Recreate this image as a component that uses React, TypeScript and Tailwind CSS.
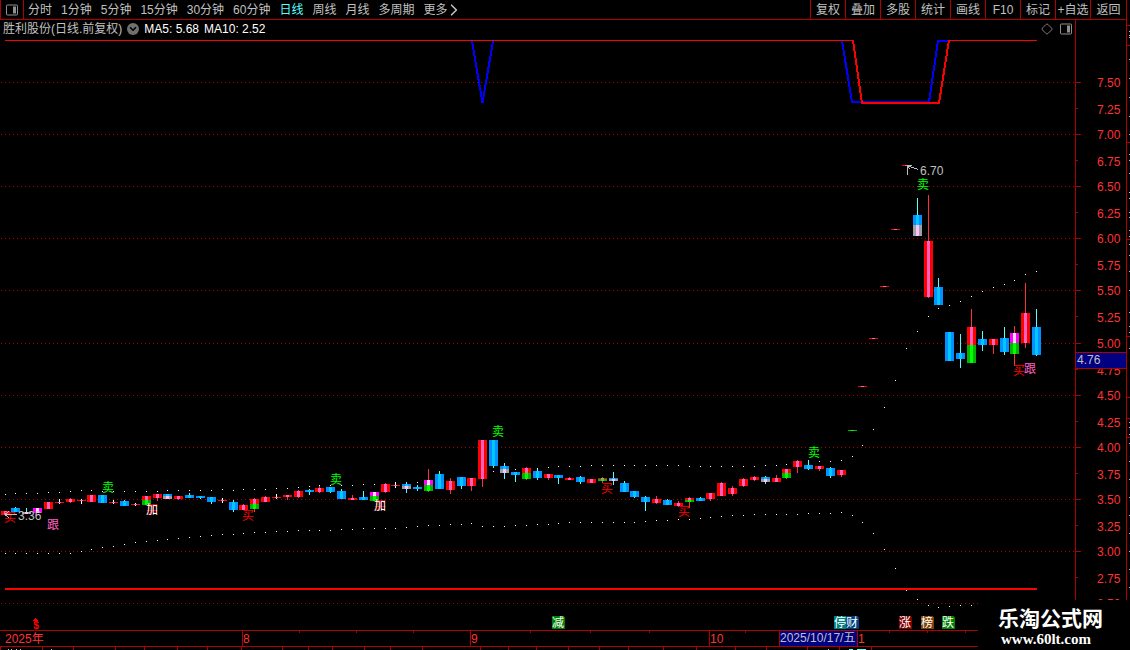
import { ChevronDown, ChevronRight, Diamond } from 'lucide-react';

type Kind = 'r' | 'b' | 'm' | 'g' | 's' | 'w';

// [kind, high, top, bottom, low, lower kind, split]
type Candle = [Kind, number, number, number, number, Kind?, number?];

interface Marker {
  x: number;
  y: number;
  text: string;
  fill: string;
}

const LINE = '#b00000';
const SILVER = '#c0c0c0';

const COLORS: Record<Kind, { body: string; core: string; wick: string }> = {
  r: { body: '#ff0000', core: '#ff60c0', wick: '#ff3232' },
  b: { body: '#0090ff', core: '#00c8ff', wick: '#54ffff' },
  m: { body: '#ff00ff', core: '#ffd8ff', wick: '#ff3232' },
  g: { body: '#00b400', core: '#00ff00', wick: '#00ff00' },
  s: { body: '#a0a0a0', core: '#ffc0ff', wick: '#54ffff' },
  w: { body: '#ff0000', core: '#ff60c0', wick: '#ffffff' },
};

const PERIODS = [
  '分时',
  '1分钟',
  '5分钟',
  '15分钟',
  '30分钟',
  '60分钟',
  '日线',
  '周线',
  '月线',
  '多周期',
];

const TOOLS = ['复权', '叠加', '多股', '统计', '画线', 'F10', '标记', '+自选'];

const CANDLES: Candle[] = [
  ['r', 511, 511, 515, 515],
  ['b', 507, 508, 512, 512],
  ['s', 508, 512, 514, 514],
  ['m', 508, 508, 513, 513],
  ['r', 502, 502, 509, 509],
  ['w', 499, 502, 503, 504],
  ['r', 498, 499, 502, 503],
  ['w', 499, 500, 501, 504],
  ['r', 495, 495, 502, 502],
  ['b', 495, 495, 503, 503],
  ['w', 500, 502, 503, 504],
  ['b', 500, 501, 506, 506],
  ['w', 503, 504, 505, 506],
  ['r', 496, 496, 505, 505, 'g', 500],
  ['r', 494, 494, 498, 501],
  ['b', 494, 494, 499, 499, 's', 496],
  ['r', 496, 496, 499, 500],
  ['b', 493, 495, 498, 498],
  ['b', 496, 496, 498, 499],
  ['b', 497, 497, 502, 504],
  ['w', 498, 500, 501, 503],
  ['b', 500, 502, 510, 512],
  ['r', 504, 505, 510, 510],
  ['r', 498, 499, 509, 512, 'g', 504],
  ['r', 496, 497, 502, 502],
  ['w', 494, 497, 498, 499],
  ['r', 495, 495, 497, 500],
  ['r', 490, 491, 497, 498],
  ['b', 489, 490, 492, 495],
  ['r', 486, 488, 492, 493],
  ['b', 487, 487, 492, 493],
  ['b', 489, 491, 499, 499],
  ['r', 495, 498, 500, 500],
  ['b', 491, 497, 500, 500],
  ['m', 492, 492, 501, 501, 'g', 496],
  ['r', 483, 484, 492, 493],
  ['w', 482, 485, 486, 488],
  ['b', 482, 484, 489, 493, 's', 486],
  ['b', 485, 487, 489, 491],
  ['m', 469, 480, 491, 492, 'g', 485],
  ['b', 471, 474, 489, 489],
  ['r', 478, 481, 490, 494],
  ['b', 477, 477, 486, 489],
  ['r', 478, 478, 486, 491],
  ['r', 440, 440, 479, 487],
  ['b', 440, 440, 466, 468],
  ['b', 463, 466, 473, 479, 's', 469],
  ['b', 472, 472, 475, 482],
  ['r', 467, 468, 479, 480, 'g', 473],
  ['b', 469, 471, 478, 480],
  ['r', 474, 474, 478, 480],
  ['b', 475, 475, 478, 484],
  ['r', 477, 478, 480, 480],
  ['b', 476, 477, 482, 484],
  ['r', 479, 479, 483, 483],
  ['r', 477, 478, 481, 483, 'g', 479],
  ['b', 472, 478, 481, 485, 's', 479],
  ['b', 481, 483, 492, 492],
  ['b', 491, 491, 497, 498],
  ['b', 496, 497, 502, 511],
  ['r', 496, 499, 503, 504],
  ['b', 499, 500, 505, 505],
  ['r', 501, 503, 506, 507],
  ['r', 497, 498, 502, 508, 'g', 500],
  ['b', 497, 498, 501, 501],
  ['r', 493, 493, 499, 501],
  ['r', 482, 483, 496, 496],
  ['r', 486, 488, 494, 496],
  ['r', 478, 479, 486, 487],
  ['r', 476, 477, 480, 481],
  ['b', 476, 477, 482, 484, 's', 479],
  ['r', 475, 478, 482, 482],
  ['r', 469, 469, 478, 479, 'g', 473],
  ['r', 460, 461, 467, 473],
  ['b', 460, 465, 469, 470],
  ['r', 466, 466, 469, 471],
  ['b', 467, 468, 476, 478],
  ['r', 470, 470, 475, 477],
  ['g', 430, 430, 431, 431],
  ['r', 386, 386, 387, 387],
  ['r', 338, 338, 339, 339],
  ['r', 286, 286, 287, 287],
  ['r', 229, 229, 230, 230],
  ['r', 165, 165, 166, 166],
  ['b', 198, 215, 236, 236, 's', 225],
  ['r', 195, 241, 297, 298],
  ['b', 278, 287, 305, 305],
  ['b', 332, 332, 361, 361],
  ['b', 334, 353, 359, 368],
  ['r', 309, 327, 363, 363, 'g', 345],
  ['b', 331, 339, 345, 351],
  ['r', 339, 339, 345, 354],
  ['b', 327, 338, 352, 355],
  ['m', 326, 333, 354, 366, 'g', 343],
  ['r', 283, 313, 343, 348],
  ['b', 309, 327, 355, 356],
];

const UPPER_BAND = [
  494, 493, 493, 493, 492, 492, 491, 490, 490, 491, 491, 491, 491, 491, 491,
  490, 490, 490, 490, 490, 489, 490, 489, 489, 489, 488, 488, 487, 486, 485,
  485, 485, 485, 484, 484, 483, 482, 482, 482, 481, 481, 480, 479, 478, 475,
  471, 470, 469, 468, 468, 467, 466, 466, 466, 465, 465, 465, 465, 465, 465,
  465, 465, 465, 466, 466, 466, 466, 466, 466, 466, 465, 465, 464, 463, 462,
  461, 461, 460, 456, 445, 429, 407, 380, 348, 331, 316, 308, 305, 301, 296,
  291, 287, 284, 280, 274, 271,
];

const LOWER_BAND = [
  553, 553, 553, 553, 553, 553, 553, 551, 549, 547, 546, 544, 542, 541, 540,
  539, 538, 537, 536, 535, 534, 534, 533, 532, 532, 531, 531, 530, 530, 530,
  530, 529, 529, 528, 528, 528, 528, 527, 526, 525, 525, 524, 524, 523, 526,
  526, 526, 525, 525, 524, 524, 523, 522, 522, 522, 522, 522, 522, 522, 521,
  520, 520, 519, 519, 518, 517, 516, 515, 515, 514, 514, 514, 514, 514, 513,
  513, 513, 512, 515, 522, 533, 549, 568, 590, 599, 605, 607, 606, 605, 605,
];

const MARKERS: Marker[] = [
  { x: 10, y: 517, text: '买', fill: '#ff0000' },
  { x: 152, y: 509, text: '买', fill: '#ff0000' },
  { x: 248, y: 515, text: '买', fill: '#ff0000' },
  { x: 380, y: 505, text: '买', fill: '#ff0000' },
  { x: 607, y: 488, text: '买', fill: '#ff0000' },
  { x: 684, y: 511, text: '买', fill: '#ff0000' },
  { x: 1019, y: 370, text: '买', fill: '#ff0000' },
  { x: 108, y: 487, text: '卖', fill: '#00ff00' },
  { x: 336, y: 479, text: '卖', fill: '#00ff00' },
  { x: 498, y: 431, text: '卖', fill: '#00ff00' },
  { x: 814, y: 452, text: '卖', fill: '#00ff00' },
  { x: 923, y: 184, text: '卖', fill: '#00ff00' },
  { x: 53, y: 524, text: '跟', fill: '#ff60c0' },
  { x: 1030, y: 368, text: '跟', fill: '#ff60c0' },
  { x: 152, y: 509, text: '加', fill: '#ffffff' },
  { x: 380, y: 505, text: '加', fill: '#ffffff' },
];

const EVENTS = [
  { x: 552, text: '减', fill: '#008000' },
  { x: 834, text: '停', fill: '#008080' },
  { x: 846, text: '财', fill: '#004080' },
  { x: 899, text: '涨', fill: '#800000' },
  { x: 921, text: '榜', fill: '#804000' },
  { x: 942, text: '跌', fill: '#008000' },
];

const MONTHS = [
  { x: 242, text: '8' },
  { x: 470, text: '9' },
  { x: 709, text: '10' },
];

const WEEK_TICKS = [299, 356, 413, 530, 590, 649, 745, 889, 927, 965];

const TAB_EDGES = [
  0, 42, 73, 115, 144, 177, 207, 241, 282, 308, 332, 364, 390, 422, 480, 508,
  536, 568, 599, 628, 663, 696, 735, 766, 807, 839, 871,
];

// Prices from 7.50 down to 2.50 in quarter steps
const PRICES = Array.from({ length: 21 }, (_, i) => 7.5 - i * 0.25);

const barX = (i: number) => Math.floor(5 + i * 10.86);
const priceY = (price: number) => Math.round(82 + (7.5 - price) * 104.2);

function PanelIcon() {
  return (
    <svg
      aria-hidden="true"
      className="h-3 w-3 text-[#909090]"
      viewBox="0 0 12 12"
    >
      <rect
        fill="none"
        height="10"
        rx="1"
        stroke="currentColor"
        width="11"
        x="0.5"
        y="1"
      />
      <rect fill="currentColor" height="7" width="3" x="7" y="2.5" />
    </svg>
  );
}

function Segment({
  kind,
  x,
  top,
  bottom,
}: {
  kind: Kind;
  x: number;
  top: number;
  bottom: number;
}) {
  const { body, core } = COLORS[kind];
  return (
    <>
      <rect fill={body} height={bottom - top} width={9} x={x - 4} y={top} />
      <rect fill={core} height={bottom - top} width={3} x={x - 1} y={top} />
    </>
  );
}

function CandleShape({ candle, x }: { candle: Candle; x: number }) {
  const [kind, high, top, bottom, low, lowerKind, split] = candle;
  return (
    <g>
      <rect
        fill={COLORS[kind].wick}
        height={low - high}
        width={1}
        x={x}
        y={high}
      />
      <Segment bottom={split ?? bottom} kind={kind} top={top} x={x} />
      {lowerKind && split && (
        <Segment bottom={bottom} kind={lowerKind} top={split} x={x} />
      )}
    </g>
  );
}

function PriceAxis() {
  return (
    <g>
      <rect fill={LINE} height={562} width={1} x={1075} y={38} />
      {PRICES.map((price) => {
        const y = priceY(price);
        const major = (price * 2) % 1 === 0;
        return (
          <g key={price}>
            {major && (
              <line
                stroke={LINE}
                strokeDasharray="1 3"
                x1={1}
                x2={1075}
                y1={y + 0.5}
                y2={y + 0.5}
              />
            )}
            <rect fill={LINE} height={1} width={major ? 5 : 2} x={1076} y={y} />
            <text fill="#ff3232" x={1097} y={major ? y + 5 : y + 6}>
              {price.toFixed(2)}
            </text>
          </g>
        );
      })}
      <rect fill="#000080" height={16} width={50} x={1076} y={353} />
      <rect fill={LINE} height={1} width={50} x={1076} y={352} />
      <rect fill={LINE} height={1} width={50} x={1076} y={368} />
      <text fill={SILVER} x={1077} y={364}>
        4.76
      </text>
    </g>
  );
}

function DateAxis() {
  return (
    <g>
      <rect fill={LINE} height={1} width={1126} x={0} y={630} />
      <rect fill={LINE} height={1} width={1126} x={0} y={646} />
      {WEEK_TICKS.map((x) => (
        <rect fill={LINE} height={2} key={x} width={1} x={x} y={631} />
      ))}
      {TAB_EDGES.map((x) => (
        <rect fill={LINE} height={3} key={x} width={1} x={x} y={647} />
      ))}
      <text fill="#ff3232" x={5} y={643}>
        2025年
      </text>
      {MONTHS.map(({ x, text }) => (
        <g key={x}>
          <rect fill={LINE} height={16} width={1} x={x} y={630} />
          <text fill="#ff3232" x={x + 1} y={643}>
            {text}
          </text>
        </g>
      ))}
      <rect fill={LINE} height={16} width={79} x={779} y={630} />
      <rect fill="#000080" height={15} width={77} x={780} y={631} />
      <text fill={SILVER} x={780} y={642}>
        2025/10/17/五
      </text>
      <text fill="#ff3232" x={858} y={643}>
        1
      </text>
      {/* Tops of the next row's captions */}
      <path
        d="M8 649h1m2 0h1m4 0h1m3 0h1m30 0h1m776 0h1"
        stroke={SILVER}
        transform="translate(0 .5)"
      />
      <path d="M849 649.5h4m4 0h9" stroke="#54ffff" />
    </g>
  );
}

function Chart() {
  return (
    <svg
      aria-label="胜利股份 日线"
      className="block h-auto w-full text-[12px]"
      role="img"
      shapeRendering="crispEdges"
      viewBox="0 38 1126 612"
    >
      <PriceAxis />

      {[...UPPER_BAND.entries(), ...LOWER_BAND.entries()].map(([i, y]) => (
        <rect
          fill="#ffffff"
          height={1}
          key={`${i}-${y}`}
          width={1}
          x={barX(i)}
          y={y}
        />
      ))}

      <g fill="none" stroke="#0000ff" strokeWidth={2}>
        <path d="M472 41L482.500 103L493 41" />
        <path d="M842 41L852 102H929L938 41H949" />
      </g>
      <g fill="none" stroke="#ff0000">
        <path d="M5 40.500H853M949 40.500H1037" />
        <path d="M853 40L862 103H939L949 40" strokeWidth={2} />
        <path d="M5 589H1037" strokeWidth={2} />
      </g>

      {CANDLES.map((candle, i) => (
        <CandleShape candle={candle} key={barX(i)} x={barX(i)} />
      ))}

      {MARKERS.map(({ x, y, text, fill }) => (
        <text
          fill={fill}
          key={`${text}-${x}`}
          textAnchor="middle"
          x={x}
          y={y + 5}
        >
          {text}
        </text>
      ))}

      {/* Lowest and highest price pointers */}
      <g fill="none" stroke={SILVER}>
        <path d="M5 514.500H17M5 514.500L9 511.500M5 514.500L9 517.500" />
        <path d="M907.500 165V175M907 165.500L918 169.500M907 165.500H912M907 165.500L910 169" />
      </g>
      <text fill={SILVER} x={18} y={520}>
        3.36
      </text>
      <text fill={SILVER} x={920} y={175}>
        6.70
      </text>

      <path d="M35.500 618L38 621H33Z" fill="#ff0000" />
      <text
        className="text-[10px] font-bold"
        fill="#ff0000"
        textAnchor="middle"
        x={36}
        y={629}
      >
        $
      </text>
      {EVENTS.map(({ x, text, fill }) => (
        <g key={x}>
          <path d={`M${x} 616h11l2 2v11h-13z`} fill={fill} />
          <text fill="#ffffff" x={x} y={627}>
            {text}
          </text>
        </g>
      ))}

      <DateAxis />
    </svg>
  );
}

function SideStrip() {
  const redTicks = [25, 45, 142, 239, 336, 397, 418, 437];
  const whiteTicks = [
    31, 35, 37, 59, 78, 97, 116, 134, 154, 160, 173, 192, 198, 212, 217, 230,
    236, 244, 255, 271, 290, 312, 326, 332, 348, 422, 427, 434, 443, 461, 479,
    497, 515, 533, 551, 569, 587,
  ];
  return (
    <aside aria-hidden="true" className="w-1 shrink-0 border-l border-[#b00000]">
      <svg
        className="block h-auto w-full"
        shapeRendering="crispEdges"
        viewBox="0 0 3 600"
      >
        {redTicks.map((y) => (
          <rect fill={LINE} height={1} key={y} width={3} x={0} y={y} />
        ))}
        {whiteTicks.map((y) => (
          <rect fill={SILVER} height={1} key={y} width={1} x={2} y={y} />
        ))}
      </svg>
    </aside>
  );
}

export default function App() {
  return (
    <div className="relative flex min-h-screen overflow-hidden bg-black font-['Liberation_Sans','Noto_Sans_CJK_SC',sans-serif] text-[12px] leading-[18px] text-[#c0c0c0]">
      <main className="min-w-0 flex-1">
        <nav className="flex h-5 border-b border-[#b00000] whitespace-nowrap">
          <button
            aria-label="侧栏"
            className="flex w-6 items-center justify-center border-x border-[#b00000]"
            type="button"
          >
            <PanelIcon />
          </button>
          <div className="flex gap-[9px] pl-1">
            {PERIODS.map((period) => (
              <button
                className={period === '日线' ? 'text-[#54ffff]' : ''}
                key={period}
                type="button"
              >
                {period}
              </button>
            ))}
            <button className="flex items-center" type="button">
              更多
              <ChevronRight className="h-4 w-3" strokeWidth={2} viewBox="5 2 14 20" />
            </button>
          </div>
          <div className="ml-auto flex">
            {TOOLS.map((tool) => (
              <button
                className="w-[35px] border-l border-[#b00000] text-center"
                key={tool}
                type="button"
              >
                {tool}
              </button>
            ))}
            <button
              className="w-9 border-l border-[#b00000] text-center"
              type="button"
            >
              返回
            </button>
          </div>
        </nav>

        <header className="flex h-[18px] whitespace-nowrap">
          <div className="flex flex-1 items-center gap-[5px] pl-[3px]">
            <h1>胜利股份(日线.前复权)</h1>
            <button
              aria-label="指标"
              className="flex h-3 w-3 items-center justify-center rounded-full bg-[#707070] text-black"
              type="button"
            >
              <ChevronDown className="h-[10px] w-[10px]" strokeWidth={4} />
            </button>
            <span className="text-white">MA5: 5.68</span>
            <span className="text-white">MA10: 2.52</span>
          </div>
          <div className="flex items-center gap-[7px] border-r border-[#b00000] pr-[3px]">
            <Diamond className="h-3 w-3 text-[#808080]" strokeWidth={2} />
            <PanelIcon />
          </div>
          <div className="w-[50px]" />
        </header>

        <Chart />
      </main>

      <SideStrip />

      <div className="absolute right-0 bottom-0 flex h-[50px] w-[152px] flex-col items-start bg-black pt-2 pl-5 text-white">
        <strong className="text-[21px] leading-[22px]">乐淘公式网</strong>
        <a
          className="pl-[3px] font-['Liberation_Serif',serif] text-[15px] leading-[18px] font-bold"
          href="#"
        >
          www.60lt.com
        </a>
      </div>
    </div>
  );
}
